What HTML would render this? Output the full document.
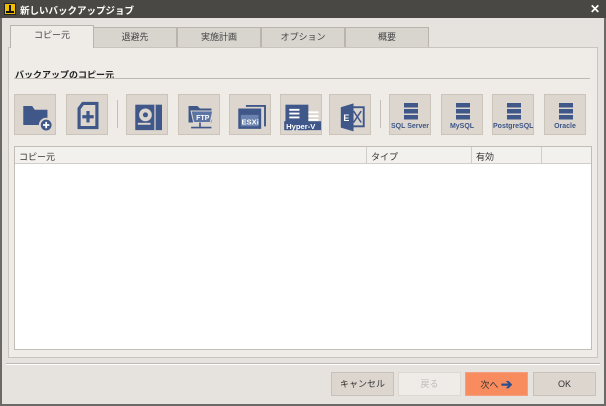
<!DOCTYPE html>
<html><head><meta charset="utf-8"><style>
*{box-sizing:border-box;margin:0;padding:0}
body{width:606px;height:406px;position:relative;overflow:hidden;background:#e6e2dd;font-family:"Liberation Sans","Noto Sans CJK JP",sans-serif;font-size:9px;color:#333}
.abs{position:absolute}
#title{left:0;top:0;width:606px;height:18px;background:#494844;color:#fff;font-weight:bold;font-size:9.5px}
#frame{left:0;top:18px;width:606px;height:388px;border:2px solid #6b6a66;border-top:none}
.tab{position:absolute;top:27px;height:20px;width:84px;background:#d8d4ce;border:1px solid #b9b4ae;border-bottom:none;text-align:center;line-height:19px;color:#444}
.tab.on{background:#efece8;top:25px;height:23px;z-index:2}
#panel{left:8px;top:47px;width:590px;height:311px;background:#efece8;border:1px solid #c9c4be}
.ib{position:absolute;top:94px;width:42px;height:41px;background:#ddd6ce;border:1px solid #cbc4bb}
.ib svg{position:absolute;left:0;top:0}
.lbl{position:absolute;left:0;width:100%;top:28px;text-align:center;font-size:7px;font-weight:bold;color:#3d5688}
.btn{position:absolute;top:372px;height:24px;width:63px;border:1px solid #c8c1b9;background:#ddd6ce;text-align:center;line-height:22px;color:#333}
</style></head><body>
<div class="abs" id="frame"></div>
<div class="abs" id="title">
 <div class="abs" style="left:4px;top:3px;width:12px;height:12px;background:#f0c000;border:1px solid #222"></div>
 <div class="abs" style="left:9px;top:5px;width:2px;height:7px;background:#111"></div>
 <div class="abs" style="left:6px;top:11px;width:8px;height:2px;background:#111"></div>
 <div class="abs" style="left:20px;top:3px">新しいバックアップジョブ</div>
 <div class="abs" style="left:590px;top:2px;font-size:12px;font-weight:bold">✕</div>
</div>
<div class="tab on" style="left:10px">コピー元</div>
<div class="tab" style="left:93px">退避先</div>
<div class="tab" style="left:177px">実施計画</div>
<div class="tab" style="left:261px">オプション</div>
<div class="tab" style="left:345px">概要</div>
<div class="abs" id="panel"></div>
<div class="abs" style="left:15px;top:68px;font-weight:bold;color:#222">バックアップのコピー元</div>
<div class="abs" style="left:14px;top:78px;width:576px;height:1px;background:#bdb8b2"></div>

<div class="ib" style="left:14px"><svg width="42" height="41" viewBox="4.5 4.5 33 32"><path d="M11 13h7l2 3h10v12H11z" fill="#3f5889"/><circle cx="29" cy="28" r="5" fill="#3f5889" stroke="#ddd6ce" stroke-width="1.5"/><path d="M26.5 28h5M29 25.5v5" stroke="#fff" stroke-width="1.4"/></svg></div>
<div class="ib" style="left:66px"><svg width="42" height="41" viewBox="4.5 4.5 33 32"><path d="M17 11h11v19H14V15z" fill="none" stroke="#3f5889" stroke-width="2.5"/><path d="M21 17v9M16.5 21.5h9" stroke="#3f5889" stroke-width="2.5"/></svg></div>
<div class="abs" style="left:117px;top:100px;width:1px;height:28px;background:#c5bfb8"></div>
<div class="ib" style="left:126px"><svg width="42" height="41" viewBox="4.5 4.5 33 32"><rect x="11" y="12" width="21" height="20" fill="#3f5889"/><rect x="26" y="12" width="1" height="20" fill="#ddd6ce"/><circle cx="19" cy="20" r="5" fill="#ddd6ce"/><circle cx="19" cy="20" r="2" fill="#3f5889"/><path d="M13 27h10" stroke="#ddd6ce" stroke-width="1.5"/></svg></div>
<div class="ib" style="left:178px"><svg width="42" height="41" viewBox="4.5 4.5 33 32"><path d="M12 13h7l2 2h9v11H12z" fill="#3f5889"/><path d="M14 17h17l-2 9H16z" fill="#5b74a3" stroke="#ddd6ce" stroke-width=".8"/><text x="18" y="24" font-size="5.5" fill="#fff" font-family="Liberation Sans" font-weight="bold">FTP</text><path d="M21 26v4M14 30h16" stroke="#3f5889" stroke-width="1.3"/></svg></div>
<div class="ib" style="left:229px"><svg width="42" height="41" viewBox="4.5 4.5 33 32"><path d="M17 13h15v16" fill="none" stroke="#3f5889" stroke-width="1.5"/><rect x="11" y="15" width="18" height="16" fill="#3f5889"/><rect x="13" y="20" width="14" height="9" fill="#6a82ad"/><text x="13.5" y="27.5" font-size="6" fill="#fff" font-family="Liberation Sans" font-weight="bold">ESXi</text></svg></div>
<div class="ib" style="left:280px"><svg width="42" height="41" viewBox="4.5 4.5 33 32"><rect x="8" y="12" width="18" height="20" fill="#3f5889"/><path d="M11 16h8M11 19h8M11 22h8M26 18h8M26 21h8M26 24h8" stroke="#fff" stroke-width="1.5"/><rect x="7" y="25" width="29" height="7" fill="#3f5889"/><text x="8.5" y="31" font-size="6" fill="#fff" font-family="Liberation Sans" font-weight="bold">Hyper-V</text></svg></div>
<div class="ib" style="left:329px"><svg width="42" height="41" viewBox="4.5 4.5 33 32"><path d="M13 14l10-3v22l-10-3z" fill="#3f5889"/><rect x="21" y="14" width="10" height="15" fill="none" stroke="#3f5889" stroke-width="1.5"/><path d="M23 17l6 9M29 17l-6 9" stroke="#3f5889" stroke-width="1.2"/><text x="15" y="25" font-size="7" fill="#fff" font-family="Liberation Sans" font-weight="bold">E</text></svg></div>
<div class="abs" style="left:380px;top:100px;width:1px;height:28px;background:#c5bfb8"></div>
<div class="ib" style="left:389px"><svg width="42" height="41"><rect x="14" y="8" width="14" height="4.5" fill="#3f5889"/><rect x="14" y="14" width="14" height="4.5" fill="#3f5889"/><rect x="14" y="20" width="14" height="4.5" fill="#3f5889"/></svg><div class="lbl">SQL Server</div></div>
<div class="ib" style="left:441px"><svg width="42" height="41"><rect x="14" y="8" width="14" height="4.5" fill="#3f5889"/><rect x="14" y="14" width="14" height="4.5" fill="#3f5889"/><rect x="14" y="20" width="14" height="4.5" fill="#3f5889"/></svg><div class="lbl">MySQL</div></div>
<div class="ib" style="left:492px"><svg width="42" height="41"><rect x="14" y="8" width="14" height="4.5" fill="#3f5889"/><rect x="14" y="14" width="14" height="4.5" fill="#3f5889"/><rect x="14" y="20" width="14" height="4.5" fill="#3f5889"/></svg><div class="lbl">PostgreSQL</div></div>
<div class="ib" style="left:544px"><svg width="42" height="41"><rect x="14" y="8" width="14" height="4.5" fill="#3f5889"/><rect x="14" y="14" width="14" height="4.5" fill="#3f5889"/><rect x="14" y="20" width="14" height="4.5" fill="#3f5889"/></svg><div class="lbl">Oracle</div></div>

<div class="abs" style="left:14px;top:146px;width:578px;height:204px;background:#fff;border:1px solid #c2bdb7"></div>
<div class="abs" style="left:15px;top:147px;width:576px;height:17px;background:#f3f1ee;border-bottom:1px solid #d2cdc7"></div>
<div class="abs" style="left:366px;top:147px;width:1px;height:17px;background:#d2cdc7"></div>
<div class="abs" style="left:471px;top:147px;width:1px;height:17px;background:#d2cdc7"></div>
<div class="abs" style="left:541px;top:147px;width:1px;height:17px;background:#d2cdc7"></div>
<div class="abs" style="left:19px;top:150px">コピー元</div>
<div class="abs" style="left:371px;top:150px">タイプ</div>
<div class="abs" style="left:476px;top:150px">有効</div>

<div class="abs" style="left:6px;top:363px;width:594px;height:1px;background:#bdb8b2"></div>
<div class="abs" style="left:6px;top:364px;width:594px;height:1px;background:#fff"></div>
<div class="btn" style="left:331px">キャンセル</div>
<div class="btn" style="left:398px;background:#efece8;border-color:#ddd8d2;color:#bbb">戻る</div>
<div class="btn" style="left:465px;background:#f98c5e;border-color:#f0a080">次へ <span style="color:#2f4f8a;font-size:14px;font-weight:bold;vertical-align:-1px">➔</span></div>
<div class="btn" style="left:533px">OK</div>
</body></html>
